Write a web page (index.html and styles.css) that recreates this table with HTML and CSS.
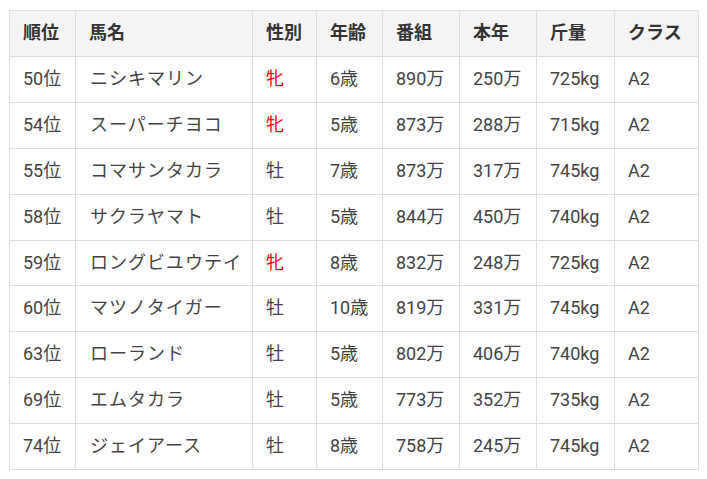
FILE: index.html
```html
<!DOCTYPE html>
<html lang="ja">
<head>
<meta charset="utf-8">
<link rel="stylesheet" href="styles.css">
</head>
<body>
<table class="rank">
<colgroup>
<col class="c1"><col class="c2"><col class="c3"><col class="c4"><col class="c5"><col class="c6"><col class="c7"><col class="c8">
</colgroup>
<thead>
<tr><th>順位</th><th>馬名</th><th>性別</th><th>年齢</th><th>番組</th><th>本年</th><th>斤量</th><th>クラス</th></tr>
</thead>
<tbody>
<tr><td>50位</td><td class="name">ニシキマリン</td><td class="f">牝</td><td>6歳</td><td>890万</td><td>250万</td><td>725kg</td><td>A2</td></tr>
<tr><td>54位</td><td class="name">スーパーチヨコ</td><td class="f">牝</td><td>5歳</td><td>873万</td><td>288万</td><td>715kg</td><td>A2</td></tr>
<tr><td>55位</td><td class="name">コマサンタカラ</td><td class="m">牡</td><td>7歳</td><td>873万</td><td>317万</td><td>745kg</td><td>A2</td></tr>
<tr><td>58位</td><td class="name">サクラヤマト</td><td class="m">牡</td><td>5歳</td><td>844万</td><td>450万</td><td>740kg</td><td>A2</td></tr>
<tr><td>59位</td><td class="name">ロングビユウテイ</td><td class="f">牝</td><td>8歳</td><td>832万</td><td>248万</td><td>725kg</td><td>A2</td></tr>
<tr><td>60位</td><td class="name">マツノタイガー</td><td class="m">牡</td><td>10歳</td><td>819万</td><td>331万</td><td>745kg</td><td>A2</td></tr>
<tr><td>63位</td><td class="name">ローランド</td><td class="m">牡</td><td>5歳</td><td>802万</td><td>406万</td><td>740kg</td><td>A2</td></tr>
<tr><td>69位</td><td class="name">エムタカラ</td><td class="m">牡</td><td>5歳</td><td>773万</td><td>352万</td><td>735kg</td><td>A2</td></tr>
<tr><td>74位</td><td class="name">ジェイアース</td><td class="m">牡</td><td>8歳</td><td>758万</td><td>245万</td><td>745kg</td><td>A2</td></tr>
</tbody>
</table>
</body>
</html>
```

FILE: styles.css
```css
html, body {
  margin: 0;
  padding: 0;
  background: #fff;
}
body {
  padding: 10px 0 0 9px;
  font-family: Roboto, "Noto Sans CJK JP", sans-serif;
  font-size: 18px;
  color: #333;
}
.rank {
  border-collapse: collapse;
  table-layout: fixed;
  width: 689px;
}
.c1 { width: 66px; }
.c2 { width: 177px; }
.c3 { width: 64px; }
.c4 { width: 66px; }
.c5 { width: 77px; }
.c6 { width: 77px; }
.c7 { width: 78px; }
.c8 { width: 84px; }
.rank th, .rank td {
  border: 1px solid #ddd;
  padding: 9px 13px;
  line-height: 26.9px;
  text-align: left;
  white-space: nowrap;
}
.rank th {
  background: #f4f4f4;
  font-weight: 700;
  color: #333;
}
.rank td {
  font-weight: 400;
  color: #444;
}
.rank td.name {
  padding-left: 14px;
  letter-spacing: 1px;
}
.rank td.f { color: #f00; }
.rank td.m { color: #445; }
```
